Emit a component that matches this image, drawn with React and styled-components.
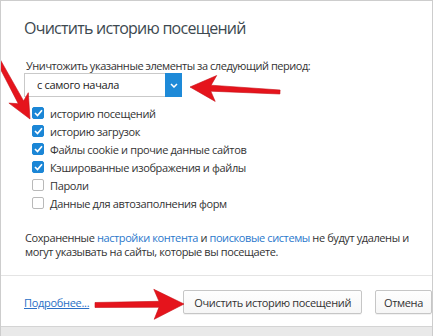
import React from "react";
import styled, { createGlobalStyle } from "styled-components";

const Global = createGlobalStyle`
  html, body { margin: 0; padding: 0; background: #ffffff; }
  body { font-family: "Open Sans", "Noto Sans", sans-serif; }
`;

const Dialog = styled.div`
  position: relative;
  width: 433px;
  height: 336px;
  box-sizing: border-box;
  border: 1px solid #cdcdcd;
  border-bottom: none;
  background: #e9e9e9;
  display: flex;
  flex-direction: column;
  overflow: hidden;
`;

const Body = styled.div`
  background: #ffffff;
  padding: 15px 20px 16px 23px;
  display: flex;
  flex-direction: column;
`;

const Title = styled.h1`
  margin: 0;
  font-size: 16px;
  line-height: 24px;
  font-weight: 400;
  letter-spacing: -0.75px;
  color: #3d4950;
`;

const Label = styled.div`
  margin-top: 19px;
  font-size: 11px;
  line-height: 14px;
  letter-spacing: -0.45px;
  color: #333;
  padding-left: 2px;
`;

const Select = styled.div`
  width: 158px;
  height: 24px;
  box-sizing: border-box;
  border: 1px solid #c9c9c9;
  display: flex;
  align-items: stretch;
  background: #fff;
`;

const SelectText = styled.div`
  flex: 1;
  font-size: 11px;
  line-height: 22px;
  letter-spacing: -0.3px;
  color: #222;
  padding-left: 12px;
`;

const SelectButton = styled.div`
  width: 17px;
  background: #1e8ad8;
  display: flex;
  align-items: center;
  justify-content: center;
  margin: -1px -1px -1px 0;
`;

const List = styled.div`
  margin-top: 7px;
  padding-left: 8px;
  display: flex;
  flex-direction: column;
`;

const Row = styled.label`
  height: 18px;
  display: flex;
  align-items: center;
  gap: 6px;
  font-size: 11px;
  letter-spacing: -0.35px;
  color: #333;
`;

const Box = styled.span`
  width: 12px;
  height: 12px;
  box-sizing: border-box;
  border-radius: 2px;
  border: 1px solid ${(p) => (p.$checked ? "#1b86d6" : "#b9b9b9")};
  background: ${(p) => (p.$checked ? "#1b86d6" : "#fff")};
  display: flex;
  align-items: center;
  justify-content: center;
`;

const Para = styled.p`
  margin: 19px 0 0;
  font-size: 11px;
  line-height: 14px;
  letter-spacing: -0.4px;
  color: #333;
  padding-left: 1px;
`;

const InlineLink = styled.span`
  color: #2a78cc;
`;

const Footer = styled.div`
  background: #ffffff;
  border-top: 1px solid #e4e4e4;
  border-bottom: 1px solid #d4d4d4;
  padding: 14px 0 12px 23px;
  display: flex;
  align-items: center;
`;

const MoreLink = styled.a`
  font-size: 11px;
  letter-spacing: -0.3px;
  color: #2a6fc6;
  text-decoration: underline;
  margin-right: auto;
`;

const Buttons = styled.div`
  display: flex;
  gap: 13px;
`;

const Button = styled.button`
  height: 24px;
  box-sizing: border-box;
  padding: 0 ${(p) => p.$pad}px;
  font-family: "Open Sans", "Noto Sans", sans-serif;
  font-size: 11px;
  letter-spacing: -0.35px;
  color: #333;
  background: linear-gradient(#fefefe, #f6f6f6);
  border: 1px solid #c6c6c6;
  border-radius: 2px;
  box-shadow: 0 1px 0 rgba(0,0,0,0.05);
`;

const Overlay = styled.svg`
  position: absolute;
  left: 0;
  top: 0;
  pointer-events: none;
`;

function arrowPoints(x1, y1, x2, y2, w1, w2, hl, hw) {
  const dx = x2 - x1, dy = y2 - y1;
  const L = Math.hypot(dx, dy);
  const ux = dx / L, uy = dy / L;
  const nx = -uy, ny = ux;
  const bx = x2 - ux * hl, by = y2 - uy * hl;
  const p = [
    [x1 + nx * w1 / 2, y1 + ny * w1 / 2],
    [bx + nx * w2 / 2 + ux * 3, by + ny * w2 / 2 + uy * 3],
    [bx + nx * hw / 2 - ux * 2, by + ny * hw / 2 - uy * 2],
    [x2, y2],
    [bx - nx * hw / 2 - ux * 2, by - ny * hw / 2 - uy * 2],
    [bx - nx * w2 / 2 + ux * 3, by - ny * w2 / 2 + uy * 3],
    [x1 - nx * w1 / 2, y1 - ny * w1 / 2],
  ];
  return p.map((q) => q.map((v) => v.toFixed(1)).join(",")).join(" ");
}

const arrows = [
  arrowPoints(-4, 57, 29, 118, 4, 6, 22, 22),
  arrowPoints(279, 91, 189, 86, 4, 6, 24, 26),
  arrowPoints(94, 304, 183, 303, 5, 6, 28, 30),
];

const items = [
  ["историю посещений", true],
  ["историю загрузок", true],
  ["Файлы cookie и прочие данные сайтов", true],
  ["Кэшированные изображения и файлы", true],
  ["Пароли", false],
  ["Данные для автозаполнения форм", false],
];

export default function App() {
  return (
    <>
      <Global />
      <Dialog>
        <Body>
          <Title>Очистить историю посещений</Title>
          <Label>Уничтожить указанные элементы за следующий период:</Label>
          <Select>
            <SelectText>с самого начала</SelectText>
            <SelectButton>
              <svg width="8" height="5" viewBox="0 0 8 5">
                <path d="M1 1 L4 4 L7 1" fill="none" stroke="#fff" strokeWidth="1.5" />
              </svg>
            </SelectButton>
          </Select>
          <List>
            {items.map(([t, c]) => (
              <Row key={t}>
                <Box $checked={c}>
                  {c && (
                    <svg width="9" height="8" viewBox="0 0 9 8">
                      <path d="M1 4 L3.5 6.5 L8 1.2" fill="none" stroke="#fff" strokeWidth="1.7" />
                    </svg>
                  )}
                </Box>
                {t}
              </Row>
            ))}
          </List>
          <Para>
            Сохраненные <InlineLink>настройки контента</InlineLink> и{" "}
            <InlineLink>поисковые системы</InlineLink> не будут удалены и
            <br />
            могут указывать на сайты, которые вы посещаете.
          </Para>
        </Body>
        <Footer>
          <MoreLink>Подробнее...</MoreLink>
          <Buttons>
            <Button $pad={10}>Очистить историю посещений</Button>
            <Button $pad={8}>Отмена</Button>
          </Buttons>
        </Footer>
        <Overlay width="434" height="336" viewBox="0 0 434 336">
          {arrows.map((pts, i) => (
            <polygon key={i} points={pts} fill="#e5141c" stroke="#c80d14" strokeWidth="0.6" strokeLinejoin="round" />
          ))}
        </Overlay>
      </Dialog>
    </>
  );
}
